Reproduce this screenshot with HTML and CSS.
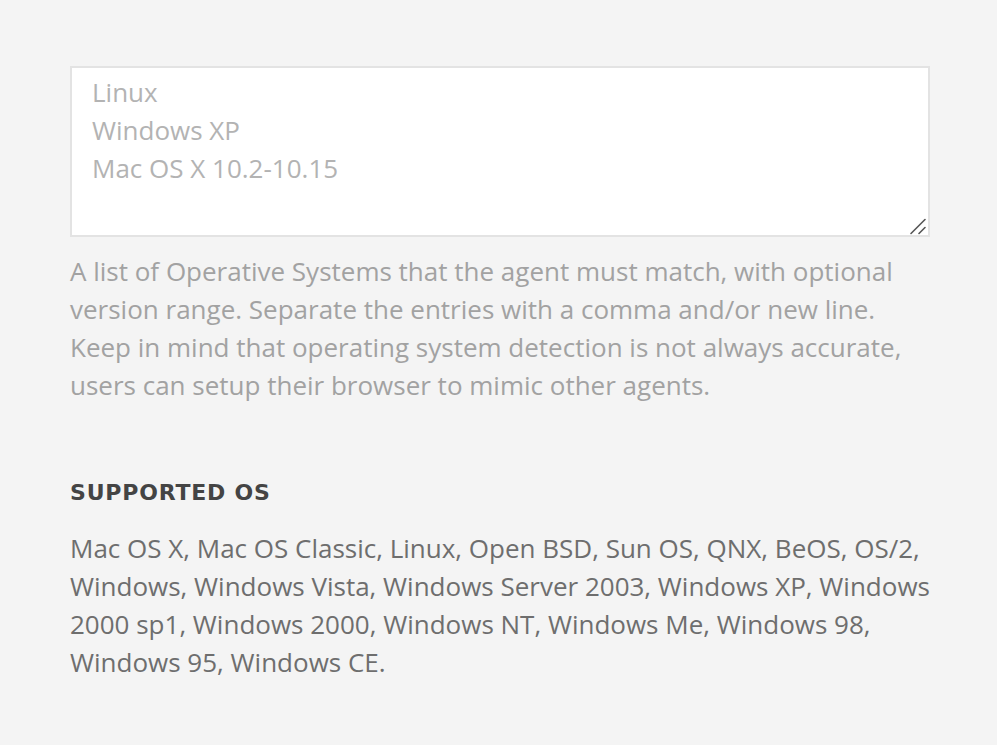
FILE: index.html
```html
<!DOCTYPE html>
<html lang="en">
<head>
<meta charset="utf-8">
<title>Supported OS</title>
<link rel="stylesheet" href="styles.css">
</head>
<body>
<main class="page">
  <section class="field">
    <div class="input-wrap">
      <textarea class="os-input" placeholder="Linux
Windows XP
Mac OS X 10.2-10.15"></textarea>
      <svg class="grip" width="18" height="18" viewBox="0 0 18 18" aria-hidden="true">
        <path d="M2 16.5 L16 2.5" stroke="#555" stroke-width="1.6" stroke-linecap="round"/>
        <path d="M10 16.5 L16 10.5" stroke="#555" stroke-width="1.6" stroke-linecap="round"/>
      </svg>
    </div>
    <p class="help">A list of Operative Systems that the agent must match, with optional version range. Separate the entries with a comma and/or new line. Keep in mind that operating system detection is not always accurate, users can setup their browser to mimic other agents.</p>
  </section>
  <section class="supported">
    <h3 class="supported-title">SUPPORTED OS</h3>
    <p class="supported-list">Mac OS X, Mac OS Classic, Linux, Open BSD, Sun OS, QNX, BeOS, OS/2, Windows, Windows Vista, Windows Server 2003, Windows XP, Windows 2000 sp1, Windows 2000, Windows NT, Windows Me, Windows 98, Windows 95, Windows CE.</p>
  </section>
</main>
</body>
</html>
```
FILE: styles.css
```css
html, body {
  margin: 0;
  padding: 0;
  background: #f4f4f4;
}
body {
  font-family: "Open Sans", "Liberation Sans", sans-serif;
}
.page {
  width: 860px;
  padding: 66px 0 0 70px;
}
.field {
  display: flex;
  flex-direction: column;
  gap: 15px;
}
.input-wrap {
  position: relative;
}
.os-input {
  display: block;
  box-sizing: border-box;
  width: 860px;
  height: 171px;
  margin: 0;
  border: 2px solid #e3e3e3;
  background: #ffffff;
  padding: 5px 20px 6px;
  font-family: "Open Sans", "Liberation Sans", sans-serif;
  font-size: 26px;
  line-height: 38px;
  color: #555;
  resize: none;
  outline: none;
}
.os-input::placeholder {
  color: #b3b3b3;
  opacity: 1;
}
.grip {
  position: absolute;
  right: 3px;
  bottom: 2px;
}
.help {
  margin: 0;
  font-size: 26px;
  line-height: 38px;
  color: #a2a2a2;
}
.supported {
  margin-top: 74px;
}
.supported-title {
  margin: 0;
  font-family: "DejaVu Sans", "Open Sans", sans-serif;
  font-weight: 700;
  font-size: 22px;
  line-height: 30px;
  letter-spacing: 0.8px;
  color: #444444;
}
.supported-list {
  margin: 21px 0 0;
  font-size: 26px;
  line-height: 38px;
  color: #6e6e6e;
}
```
